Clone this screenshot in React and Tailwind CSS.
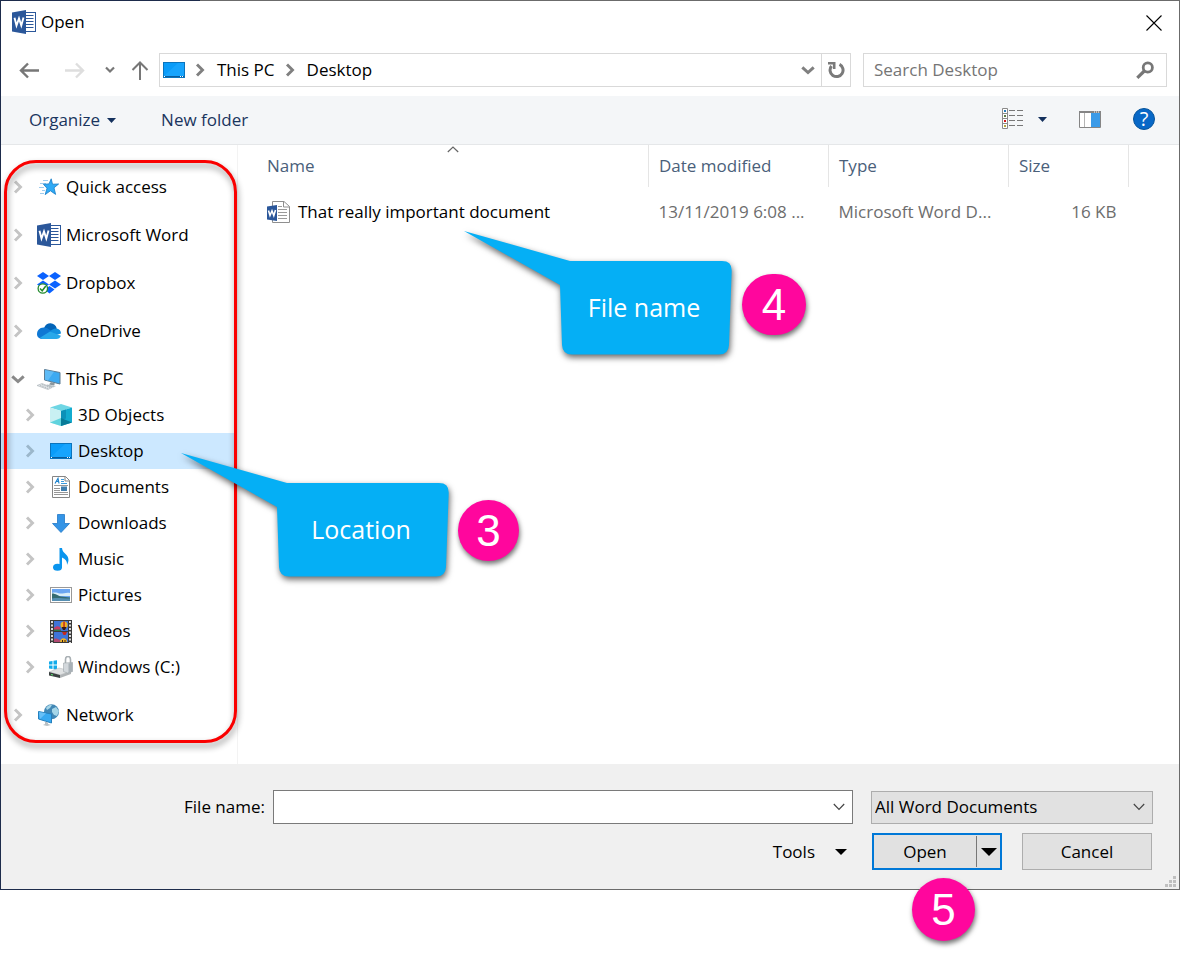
import React from "react";

function WordIcon() {
  return (
    <svg width="24" height="24" viewBox="0 0 24 24" aria-hidden="true">
      <rect x="12" y="2.5" width="11.5" height="19" fill="#fff" stroke="#2b579a" />
      <path d="M14 5.5h7.500M14 8.500h7.500M14 11.500h7.500M14 14.500h7.500M14 17.500h7.500" stroke="#2b579a" />
      <path d="M0 2.500 14 0v24L0 21.500z" fill="#2b579a" />
      <path d="M2.500 7.800 4.500 15.500 7 8.500 9.300 15.500 11.500 7.500" fill="none" stroke="#fff" strokeWidth="1.900" />
    </svg>
  );
}

function WordFileIcon() {
  return (
    <svg width="23" height="22" viewBox="0 0 23 22" aria-hidden="true">
      <path d="M5.500.5h11.500l5.500 5v16h-17z" fill="#fff" stroke="#8f8f8f" />
      <path d="M16.500.5v5.500h6" fill="none" stroke="#8f8f8f" />
      <path d="M11 5.500h4M11 8.500h9M11 11.500h9M11 14.500h9M11 17.500h9" stroke="#9a9a9a" />
      <path d="M0 5.500 10 4v16L0 18.500z" fill="#2b579a" />
      <path d="M1.500 9.500 3 14.500 5 9.800 6.800 14.500 8.500 9" fill="none" stroke="#fff" strokeWidth="1.600" />
    </svg>
  );
}

function DesktopIcon() {
  return (
    <svg width="22" height="17" viewBox="0 0 22 17" aria-hidden="true">
      <rect x=".5" y=".5" width="21" height="15" fill="#0a9cf9" stroke="#0a74bd" />
      <path d="M1 14 15 1h6v13z" fill="#1ca8ff" opacity=".7" />
      <path d="M1 14.500h20" stroke="#0a5c9c" />
      <path d="M1 14.500h1M17 14.500h1M19 14.500h1" stroke="#fff" />
    </svg>
  );
}

function StarIcon() {
  return (
    <svg width="20" height="18" viewBox="0 0 20 18" aria-hidden="true">
      <path d="M4 2.500h5M1 5.500h6M0 9.500h5M3 12.500h3M1 15.500h4" stroke="#9ccbee" />
      <path d="m12.200.8 1.300 5.400 6.100-.2-4.600 3.800 1.600 6.600-5.200-3.600-5.200 3.800 1.800-6.400-3.600-3.900 5.600-.4z" fill="#2faaf5" stroke="#157cc8" strokeWidth=".8" />
    </svg>
  );
}

function DropboxIcon() {
  return (
    <svg width="24" height="22" viewBox="0 0 24 22" aria-hidden="true">
      <path d="m6 0 6 4-6 4-6-4zM18 0l6 4-6 4-6-4zM6 8.500l6 4-6 4-6-4zM18 8.500l6 4-6 4-6-4zM12.500 14l5 3.600-5 3.900-5-3.900z" fill="#0a62ff" />
      <circle cx="5.800" cy="16.500" r="4.700" fill="#fff" stroke="#238a2c" strokeWidth="1.300" />
      <path d="m3 16.500 2.200 2.300L8.800 14" fill="none" stroke="#238a2c" strokeWidth="1.500" />
    </svg>
  );
}

function OneDriveIcon() {
  return (
    <svg width="24" height="16" viewBox="0 0 24 16" aria-hidden="true">
      <path d="M7 5C8.500 1.500 11 .2 13.500.3c3 .1 5.500 2 6.300 5.200L13 11z" fill="#0364b8" />
      <path d="M0 11c0-3.500 2.600-6.500 6.500-6.500 2.500 0 4 .8 6 2.200L20 12 6 16c-3.500 0-6-1.800-6-5z" fill="#0f78d4" />
      <path d="m13 8 3-1.800c1.200-.7 2.500-.8 3.800-.7C22.500 6 24 8 24 10.500l-6 2z" fill="#1490df" />
      <path d="m3 14.700 10-6.200 10.900 4.200c-.6 2-2.400 3.300-4.500 3.300H6c-1.200 0-2.200-.6-3-1.300z" fill="#28a8ea" />
    </svg>
  );
}

function PcIcon() {
  return (
    <svg width="24" height="21" viewBox="0 0 24 21" aria-hidden="true">
      <path d="m7.500.5 15.500 3v11.500L7.500 11z" fill="#3daaf2" stroke="#5d7d94" />
      <path d="m8 1 9 1.800-6 8.700-3-.8z" fill="#6cc2f8" opacity=".7" />
      <path d="m14 13 4 1.500-1 2-5-1z" fill="#8b979e" />
      <path d="m10 15.500 9 1.500-3 1.500-7-1.500z" fill="#b9c2c7" />
      <path d="m0 16.500 5-2 10 4-4 2z" fill="#dfe4e7" stroke="#a8b0b5" strokeWidth=".6" />
      <path d="m3 16.500 8 3M5 15.500l8 3" stroke="#a2aab0" strokeWidth=".7" strokeDasharray="1.500 1" />
    </svg>
  );
}

function CubeIcon() {
  return (
    <svg width="22" height="22" viewBox="0 0 22 22" aria-hidden="true">
      <path d="M0 3.500 11 0l11 3.500L11 7z" fill="#6fd6e4" />
      <path d="M0 3.500 11 7v15L0 18.500z" fill="#c9f0f3" />
      <path d="M11 7l11-3.500v15L11 22z" fill="#12abcf" />
      <path d="M11 7l5-1.500v9L11 16z" fill="#0b91b8" />
      <path d="M0 18.500 11 14v8z" fill="#5fd3de" />
      <path d="m11 14 11 4.500L11 22z" fill="#087b98" />
    </svg>
  );
}

function DocumentIcon() {
  return (
    <svg width="18" height="22" viewBox="0 0 18 22" aria-hidden="true">
      <path d="M.5.500h13l4 4v17H.5z" fill="#fff" stroke="#858585" />
      <path d="M13 .5V5h4.500" fill="none" stroke="#858585" />
      <path d="M3 7.500 6 2.500l1 5M4 5.500h3" fill="none" stroke="#1e82cc" strokeWidth="1.200" />
      <path d="M9 3.500h3M9 5.500h3M9 7.500h6" stroke="#3b9add" />
      <path d="M2 9.500h14M2 12.500h6M2 14.500h6M2 16.500h14M2 18.500h14" stroke="#979797" />
      <path d="M9 10.500h6V15H9z" fill="#3f7dad" />
    </svg>
  );
}

function DownloadIcon() {
  return (
    <svg width="18" height="19" viewBox="0 0 18 19" aria-hidden="true">
      <path d="M5.500.5h7v9h5L9 18.500.5 9.500h5z" fill="#3494e6" stroke="#2279c6" strokeWidth=".8" />
    </svg>
  );
}

function MusicIcon() {
  return (
    <svg width="16" height="23" viewBox="0 0 16 23" aria-hidden="true">
      <ellipse cx="4.500" cy="19.200" rx="4.500" ry="3.500" fill="#0a95ee" />
      <path d="M6.500 0H9c.2 3.200 2 4.500 4 6.500 3.200 3.200 3 6.500 1 10.500.3-3.500-1.300-6-5-7.500v10H6.500z" fill="#0a95ee" />
    </svg>
  );
}

function PictureIcon() {
  return (
    <svg width="22" height="16" viewBox="0 0 22 16" aria-hidden="true">
      <rect x=".5" y=".5" width="21" height="15" fill="#fff" stroke="#999" />
      <path d="M2 2h18v12H2z" fill="#6aa5f2" />
      <path d="M2 6c3-1 5 0 8 .5S16 5 20 6v3H2z" fill="#d9edf9" />
      <path d="M2 6.500c4 0 6 2.500 9 3l9 1V14H2z" fill="#356b72" />
      <path d="M2 11.500c5-1 10 0 18 0V14H2z" fill="#568fb2" />
    </svg>
  );
}

function VideoIcon() {
  return (
    <svg width="22" height="23" viewBox="0 0 22 23" aria-hidden="true">
      <path d="M0 0h22v23H0z" fill="#3a3a3a" />
      <path d="M2 1v22M20 1v22" stroke="#dcdcdc" strokeWidth="2" strokeDasharray="2 1.500" />
      <path d="M4 1h14v10H4zM4 12h14v10H4z" fill="#3f74d8" />
      <path d="M4 8c2-2 4-2 6-1v4H4z" fill="#c43c68" />
      <path d="M4 9.500h7V11H4z" fill="#2c7a4a" />
      <path d="M4 19c2-1 4 0 6 1v2H4z" fill="#b04a72" />
      <circle cx="14" cy="5" r="3.500" fill="#f0b322" />
      <path d="M13.300 1.500h1.500V8h-1.500z" fill="#c52b1e" />
      <path d="M11.500 7h5l-1.500 3h-2z" fill="#3a1d12" />
      <path d="M12 12h5l-1.500 3h-2z" fill="#c52b1e" />
      <path d="M10 22c0-5 7-5 7 0z" fill="#f0b322" />
      <path d="M12 20h1v2h-1zM14.500 20h1v2h-1z" fill="#3a1d12" />
    </svg>
  );
}

function DriveIcon() {
  return (
    <svg width="24" height="22" viewBox="0 0 24 22" aria-hidden="true">
      <path d="M0 5.500 3.500 5v3.500H0zM4.500 4.800 8 4.300v4.200H4.500zM0 9.500h3.500V13L0 12.500zM4.500 9.500H8v4.200l-3.500-.5z" fill="#12abea" />
      <path d="m0 16 10-4 12 3-11 4z" fill="#e0e2e3" stroke="#b0b4b6" strokeWidth=".5" />
      <path d="m0 16 11 3v3L0 19.500z" fill="#3b4242" />
      <path d="m11 19 11-4v3l-11 4z" fill="#b1b5b7" />
      <path d="M2 18.500 4 19" stroke="#5de66f" strokeWidth="1.200" />
      <path d="M16.500 8V3.500c0-4 5-4 5 0V8" fill="none" stroke="#a9b0b4" strokeWidth="1.600" />
      <path d="m14.500 7 9-.5v9l-5 1.500-4-1.500z" fill="#d3d8dc" stroke="#939a9f" strokeWidth=".5" />
      <path d="m19.500 7.500 4-1v9l-4 1.500z" fill="#a8b0b6" />
    </svg>
  );
}

function NetworkIcon() {
  return (
    <svg width="22" height="22" viewBox="0 0 22 22" aria-hidden="true">
      <circle cx="13.500" cy="7.800" r="7.500" fill="#4187b5" />
      <path d="M8 4c2-3 5-3.500 6-3l-2 3-3 2zM14 5l4-2 3 4-2 5-3-1-2-3z" fill="#a6d6e8" />
      <path d="M10 9l3 2-1 3z" fill="#8dc6dd" />
      <path d="m.5 7.500 13 2.500v9L.5 15z" fill="#38a9f1" stroke="#2580bd" />
      <path d="m1 8 7 1.300L2 15z" fill="#7ccbfb" opacity=".7" />
      <path d="m7 17.500 3 1v1.500l3 1-4 1-4-1 2-1z" fill="#b9c0c4" />
    </svg>
  );
}

function Chevron({ className = "text-[#c4c4c4]", open = false }) {
  return open ? (
    <svg className={className} width="14" height="14" viewBox="0 0 14 14" aria-hidden="true">
      <path d="M1.300 4.300 7 9.500l5.700-5.200" fill="none" stroke="currentColor" strokeWidth="3" />
    </svg>
  ) : (
    <svg className={className} width="14" height="14" viewBox="0 0 14 14" aria-hidden="true">
      <path d="M4 1.500 9.500 7 4 12.500" fill="none" stroke="currentColor" strokeWidth="2.900" />
    </svg>
  );
}

function ThinDown() {
  return (
    <svg width="12" height="8" viewBox="0 0 12 8" aria-hidden="true">
      <path d="m.8 1 5.200 5.300L11.200 1" fill="none" stroke="#444" strokeWidth="1.200" />
    </svg>
  );
}

function Triangle({ width = 12, height = 6, className = "text-black" }) {
  return (
    <svg className={className} width={width} height={height} viewBox="0 0 12 6" preserveAspectRatio="none" aria-hidden="true">
      <path d="M0 0h12L6 6z" fill="currentColor" />
    </svg>
  );
}

const groups = [
  [{ label: "Quick access", Icon: StarIcon }],
  [{ label: "Microsoft Word", Icon: WordIcon }],
  [{ label: "Dropbox", Icon: DropboxIcon }],
  [{ label: "OneDrive", Icon: OneDriveIcon }],
  [
    { label: "This PC", Icon: PcIcon, open: true },
    { label: "3D Objects", Icon: CubeIcon, child: true },
    { label: "Desktop", Icon: DesktopIcon, child: true, selected: true },
    { label: "Documents", Icon: DocumentIcon, child: true },
    { label: "Downloads", Icon: DownloadIcon, child: true },
    { label: "Music", Icon: MusicIcon, child: true },
    { label: "Pictures", Icon: PictureIcon, child: true },
    { label: "Videos", Icon: VideoIcon, child: true },
    { label: "Windows (C:)", Icon: DriveIcon, child: true },
  ],
  [{ label: "Network", Icon: NetworkIcon }],
];

function TreeRow({ label, Icon, open, child, selected }) {
  return (
    <li>
      <button
        type="button"
        className={`flex h-9 w-full items-center text-left ${child ? "pl-[22px]" : "pl-[10px]"} ${selected ? "bg-[#cce8ff]" : ""}`}
      >
        <Chevron open={open} className={open ? "text-[#8a8a8a]" : selected ? "text-[#9bb7cb]" : "text-[#c4c4c4]"} />
        <span className="ml-3 flex w-6 shrink-0 justify-center">
          <Icon />
        </span>
        <span className="ml-[5px] whitespace-nowrap">{label}</span>
      </button>
    </li>
  );
}

function Callout({ className, children }) {
  return (
    <div className={`pointer-events-none absolute h-[124px] w-[268px] ${className}`}>
      <svg className="absolute inset-0 overflow-visible drop-shadow-[1px_3px_3px_rgba(0,0,0,0.6)]" width="268" height="124" viewBox="0 0 268 124" aria-hidden="true">
        <path d="M0 0 106 30H258q10 0 9.700 10L265 114q-.5 9.500-10 9.500H108q-9.500 0-10-9.500L96 54z" fill="#05aff5" />
      </svg>
      <div className="relative ml-[92px] flex h-full items-center justify-center pt-7 text-[25px] text-white">
        {children}
      </div>
    </div>
  );
}

function Step({ className, children }) {
  return (
    <div className={`pointer-events-none absolute flex items-center justify-center rounded-full bg-[#ff069d] font-['Liberation_Sans',sans-serif] text-[44px] leading-none text-white shadow-[1px_3px_5px_rgba(0,0,0,0.55)] ${className}`}>
      {children}
    </div>
  );
}

export default function App() {
  return (
    <div className="min-h-screen bg-white font-['Open_Sans','Noto_Sans',sans-serif] text-[17px] leading-6 text-black">
      <div className="relative border border-[#6b6b6b] border-l-[#1d2b4b] bg-white">
        <div className="absolute -top-px -left-px h-px w-[200px] bg-[#1d2b4b]" />
        <div className="absolute -bottom-px -left-px h-px w-[200px] bg-[#1d2b4b]" />
        <header className="flex h-[52px] items-start justify-between pt-[9px] pr-[17px] pl-[11px]">
          <h1 className="flex items-center gap-[5px]">
            <WordIcon />
            <span>Open</span>
          </h1>
          <button type="button" aria-label="Close" className="mt-[5px]">
            <svg width="16" height="16" viewBox="0 0 16 16" aria-hidden="true">
              <path d="m.5.500 15 15m0-15-15 15" stroke="#000" strokeWidth="1.100" />
            </svg>
          </button>
        </header>

        <nav className="flex h-[43px] items-start pr-3 pl-[18px]">
          <div className="flex h-[34px] w-[140px] shrink-0 items-center">
            <button type="button" aria-label="Back">
              <svg width="21" height="18" viewBox="0 0 21 18" aria-hidden="true">
                <path d="M20 9.500H2.500M9 2.500 2 9.500l7 7" fill="none" stroke="#777" strokeWidth="2.400" />
              </svg>
            </button>
            <button type="button" aria-label="Forward" className="ml-6">
              <svg width="21" height="18" viewBox="0 0 21 18" aria-hidden="true">
                <path d="M1 9.500h17.500M12 2.500l7 7-7 7" fill="none" stroke="#dedede" strokeWidth="2.400" />
              </svg>
            </button>
            <button type="button" aria-label="Recent locations" className="ml-5">
              <svg width="10" height="8" viewBox="0 0 10 8" aria-hidden="true">
                <path d="m1 1.500 4 4 4-4" fill="none" stroke="#777" strokeWidth="2.200" />
              </svg>
            </button>
            <button type="button" aria-label="Up" className="ml-4">
              <svg width="18" height="20" viewBox="0 0 18 20" aria-hidden="true">
                <path d="M9 20V2.500M1.500 10 9 2.500l7.500 7.500" fill="none" stroke="#777" strokeWidth="2" />
              </svg>
            </button>
          </div>
          <div className="flex h-[34px] min-w-0 flex-1 items-stretch border border-[#d9d9d9]">
            <div className="flex flex-1 items-center pl-[3px]">
              <DesktopIcon />
              <Chevron className="ml-2 text-[#808080]" />
              <a href="#this-pc" className="ml-[10px]">This PC</a>
              <Chevron className="ml-2 text-[#808080]" />
              <a href="#desktop" className="ml-[10px]">Desktop</a>
            </div>
            <button type="button" aria-label="Previous locations" className="px-[6px]">
              <Chevron open className="text-[#808080]" />
            </button>
            <button type="button" aria-label="Refresh" className="flex w-[29px] items-center justify-center border-l border-[#d9d9d9]">
              <svg width="18" height="18" viewBox="0 0 18 18" aria-hidden="true">
                <path d="M12.500 3.300A6.500 6.500 0 1 1 4.500 5" fill="none" stroke="#7a7a7a" strokeWidth="3" />
                <path d="M1 2.300h6.200V8" fill="none" stroke="#7a7a7a" strokeWidth="2.600" />
              </svg>
            </button>
          </div>
          <label className="ml-3 flex h-[34px] w-[304px] shrink-0 items-center border border-[#d9d9d9] pr-3 pl-[10px]">
            <input type="search" aria-label="Search Desktop" placeholder="Search Desktop" className="min-w-0 flex-1 outline-none placeholder:text-[#757575]" />
            <svg width="18" height="18" viewBox="0 0 18 18" aria-hidden="true">
              <circle cx="11.800" cy="6.500" r="4.600" fill="none" stroke="#777" strokeWidth="2.800" />
              <path d="m8.300 10-7 6.800" stroke="#777" strokeWidth="3.200" />
            </svg>
          </label>
        </nav>

        <div className="flex h-[49px] items-center border-b border-[#e5e7e9] bg-[#f4f6f8] pr-6 pl-7 text-[#1a355e]">
          <button type="button" className="flex items-center gap-[7px]">
            Organize
            <Triangle width={9} height={5} className="text-[#14315d]" />
          </button>
          <button type="button" className="ml-[45px]">New folder</button>
          <div className="ml-auto flex items-center pb-0.5">
            <button type="button" aria-label="Change view">
              <svg width="22" height="22" viewBox="0 0 22 22" aria-hidden="true">
                <path d="M.5.500h5v20h-5zM.5 5.500h5M.5 10.500h5M.5 15.500h5" fill="#fff" stroke="#8a8a8a" />
                <path d="M7 2.500h6m2 0h6M7 7.500h6m2 0h6M7 12.500h6m2 0h6M7 17.500h6m2 0h6" stroke="#777" />
                <path d="M2 3h2" stroke="#2b7eb8" strokeWidth="2" />
                <path d="M2 8h2" stroke="#5e7b42" strokeWidth="2" />
                <path d="M2 13h2" stroke="#d31919" strokeWidth="2" />
                <path d="M2 18h2" stroke="#b2a83b" strokeWidth="2" />
              </svg>
            </button>
            <button type="button" aria-label="More view options" className="ml-[14px]">
              <Triangle width={9} height={5} className="text-[#14315d]" />
            </button>
            <button type="button" aria-label="Preview pane" className="ml-8">
              <svg width="22" height="17" viewBox="0 0 22 17" aria-hidden="true">
                <path d="M.5.500h21v16H.5z" fill="#fff" stroke="#858585" />
                <path d="M0 1h22" stroke="#858585" strokeWidth="2" />
                <path d="M5.500 2v14" stroke="#b5b5b5" />
                <path d="M12 2h9v14h-9z" fill="#3b9be8" />
                <path d="M15 1h1m1 0h1m1 0h1" stroke="#fff" />
              </svg>
            </button>
            <button type="button" aria-label="Help" className="ml-8 flex h-[22px] w-[22px] items-center justify-center rounded-full border border-[#07549b] bg-[#0868c7] text-[20px] leading-none text-white">
              ?
            </button>
          </div>
        </div>

        <div className="relative flex">
          <aside className="relative w-[237px] shrink-0 border-r border-[#f3f3f3] pt-6 pr-[3px] pb-[31px]">
            <div className="flex flex-col gap-3">
              {groups.map((rows) => (
                <ul key={rows[0].label}>
                  {rows.map((row) => (
                    <TreeRow key={row.label} {...row} />
                  ))}
                </ul>
              ))}
            </div>
            <div className="pointer-events-none absolute top-[15px] right-0 bottom-[21px] left-[3px] rounded-[32px] border-[3px] border-[#fa0000] drop-shadow-[1px_4px_3px_rgba(0,0,0,0.45)]" />
          </aside>

          <main className="relative min-w-0 flex-1 pr-[50px]">
            <table className="w-full table-fixed text-left">
              <colgroup>
                <col />
                <col className="w-[180px]" />
                <col className="w-[180px]" />
                <col className="w-[120px]" />
              </colgroup>
              <thead className="text-[#4a607a]">
                <tr className="h-[42px]">
                  <th className="relative border-r border-[#e5e5e5] pl-[29px] font-normal">
                    Name
                    <svg className="absolute top-px left-1/2 ml-1" width="12" height="7" viewBox="0 0 12 7" aria-hidden="true">
                      <path d="m.8 6 5.200-5 5.200 5" fill="none" stroke="#666" strokeWidth="1.200" />
                    </svg>
                  </th>
                  <th className="border-r border-[#e5e5e5] pl-[10px] font-normal">Date modified</th>
                  <th className="border-r border-[#e5e5e5] pl-[10px] font-normal">Type</th>
                  <th className="border-r border-[#e5e5e5] pl-[10px] font-normal">Size</th>
                </tr>
              </thead>
              <tbody className="text-[#6d6d6d]">
                <tr className="h-[50px]">
                  <td className="pl-[29px] text-black">
                    <span className="flex items-center gap-2 whitespace-nowrap">
                      <WordFileIcon />
                      That really important document
                    </span>
                  </td>
                  <td className="pl-[10px] whitespace-nowrap">13/11/2019 6:08 ...</td>
                  <td className="pl-[10px] whitespace-nowrap">Microsoft Word D...</td>
                  <td className="pr-3 text-right whitespace-nowrap">16 KB</td>
                </tr>
              </tbody>
            </table>
          </main>

          <Callout className="top-[86px] left-[463px]">File name</Callout>
          <Step className="top-[129px] left-[741px] h-[61px] w-16">4</Step>
          <Callout className="top-[308px] left-[180px]">Location</Callout>
          <Step className="top-[355px] left-[457px] h-[61px] w-[61px]">3</Step>
        </div>

        <footer className="relative flex flex-col gap-[9px] bg-[#f0f0f0] pt-[26px] pr-[26px] pb-[19px]">
          <div className="flex items-center">
            <label htmlFor="file-name" className="w-[272px] shrink-0 pr-2 text-right">File name:</label>
            <div className="flex h-[34px] min-w-0 flex-1 items-center border border-[#7a7a7a] bg-white pr-[7px]">
              <input id="file-name" type="text" className="h-full min-w-0 flex-1 px-1 outline-none" />
              <button type="button" aria-label="Show file names"><ThinDown /></button>
            </div>
            <div className="relative ml-[18px] flex w-[282px] shrink-0 items-center">
              <select aria-label="File type" className="h-[33px] w-full appearance-none border border-[#adadad] bg-[#e1e1e1] pr-7 pl-[3px]">
                <option>All Word Documents</option>
              </select>
              <span className="pointer-events-none absolute right-2"><ThinDown /></span>
            </div>
          </div>
          <div className="flex items-center justify-end pr-px">
            <button type="button" className="mr-[25px] flex items-center gap-5">
              Tools
              <Triangle />
            </button>
            <div className="flex h-[37px] w-[130px] border-2 border-[#0078d7] bg-[#e1e1e1]">
              <button type="button" className="flex-1">Open</button>
              <button type="button" aria-label="Open options" className="my-px flex w-6 items-center justify-center border-l border-[#777]">
                <Triangle width={16} height={8} />
              </button>
            </div>
            <button type="button" className="ml-5 h-[37px] w-[130px] border border-[#adadad] bg-[#e1e1e1]">Cancel</button>
          </div>
          <svg className="absolute right-[3px] bottom-[2px]" width="11" height="11" viewBox="0 0 11 11" aria-hidden="true">
            <path d="M8 0h3v3H8zM4 4h3v3H4zM8 4h3v3H8zM0 8h3v3H0zM4 8h3v3H4zM8 8h3v3H8z" fill="#bfbfbf" />
          </svg>
          <Step className="right-[204px] -bottom-[52px] h-[63px] w-[63px]">5</Step>
        </footer>
      </div>
    </div>
  );
}
